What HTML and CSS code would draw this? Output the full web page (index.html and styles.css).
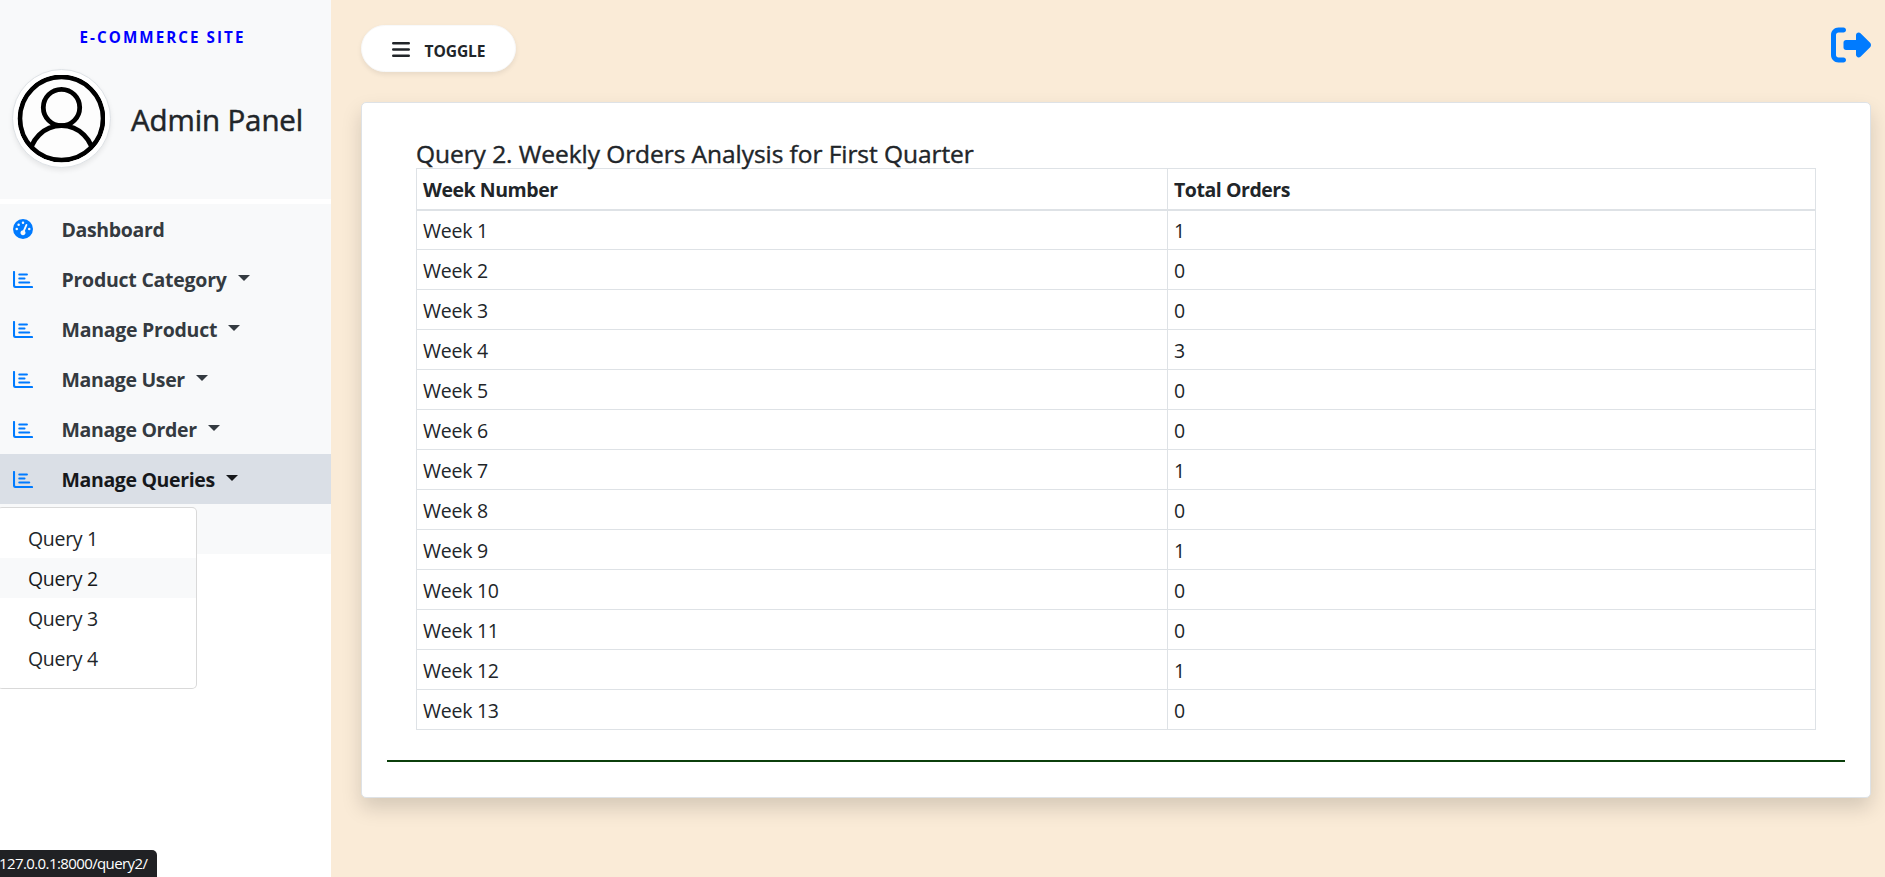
FILE: index.html
```
<!DOCTYPE html>
<html lang="en">
<head>
<meta charset="utf-8">
<title>Admin Panel</title>
<link rel="stylesheet" href="styles.css">
</head>
<body>
<svg class="sprite" aria-hidden="true">
  <symbol id="bars" viewBox="0 0 20 17">
    <path d="M1 1v13.200a1.800 1.800 0 0 0 1.800 1.800H19M6.300 3.500h7.600M6.300 7.500h5.200M6.300 11.500H16.200" fill="none" stroke="currentColor" stroke-width="2.100" stroke-linecap="round"/>
  </symbol>
</svg>
<div class="layout">
  <aside class="sidebar">
    <header class="brand">
      <p class="brand-name">E-COMMERCE SITE</p>
      <div class="profile">
        <svg class="avatar" viewBox="0 0 88 88">
          <defs><clipPath id="disc"><circle cx="44" cy="44" r="43"/></clipPath></defs>
          <circle cx="44" cy="44" r="41.6" fill="#fdfdfd"/>
          <g fill="none" stroke="#000" stroke-width="4.8">
            <circle cx="44" cy="33" r="18.2"/>
            <circle cx="44" cy="83" r="31.8" clip-path="url(#disc)"/>
            <circle cx="44" cy="44" r="41.6"/>
          </g>
        </svg>
        <h4 class="profile-name">Admin Panel</h4>
      </div>
    </header>
    <ul class="nav">
      <li class="nav-item"><svg class="gauge" viewBox="0 0 512 512"><path fill="currentColor" fill-rule="evenodd" d="M0 256a256 256 0 1 1 512 0A256 256 0 1 1 0 256zM288 96a32 32 0 1 0 -64 0 32 32 0 1 0 64 0zM256 416c35.3 0 64-28.7 64-64c0-17.4-6.9-33.1-18.1-44.6L366 161.7c5.3-12.1-.2-26.3-12.3-31.6s-26.3 .2-31.6 12.3L257.9 288c-.6 0-1.3 0-1.9 0c-35.3 0-64 28.7-64 64s28.7 64 64 64zM176 144a32 32 0 1 0 -64 0 32 32 0 1 0 64 0zM96 288a32 32 0 1 0 0-64 32 32 0 1 0 0 64zm352-32a32 32 0 1 0 -64 0 32 32 0 1 0 64 0z"/></svg><span>Dashboard</span></li>
      <li class="nav-item loose"><svg class="bars"><use href="#bars"/></svg><span>Product Category</span><i class="caret"></i></li>
      <li class="nav-item loose"><svg class="bars"><use href="#bars"/></svg><span>Manage Product</span><i class="caret"></i></li>
      <li class="nav-item"><svg class="bars"><use href="#bars"/></svg><span>Manage User</span><i class="caret"></i></li>
      <li class="nav-item"><svg class="bars"><use href="#bars"/></svg><span>Manage Order</span><i class="caret"></i></li>
      <li class="nav-item active"><svg class="bars"><use href="#bars"/></svg><span>Manage Queries</span><i class="caret"></i>
        <div class="menu">
          <a class="menu-item">Query 1</a>
          <a class="menu-item hover">Query 2</a>
          <a class="menu-item">Query 3</a>
          <a class="menu-item">Query 4</a>
        </div>
      </li>
      <li class="nav-item"></li>
    </ul>
  </aside>
  <main class="content">
    <div class="topbar">
      <button class="toggle"><svg class="burger" viewBox="0 0 18 15"><path d="M1.200 1.300h15.600M1.200 7.500h15.600M1.200 13.700h15.600" stroke="currentColor" stroke-width="2.400" stroke-linecap="round"/></svg><span>TOGGLE</span></button>
      <svg class="logout" viewBox="0 0 512 512"><path fill="currentColor" d="M377.9 105.9L500.7 228.7c7.2 7.2 11.3 17.1 11.3 27.3s-4.1 20.1-11.3 27.3L377.9 406.1c-6.4 6.4-15 9.9-24 9.9c-18.7 0-33.9-15.2-33.9-33.9l0-62.1-128 0c-17.7 0-32-14.3-32-32l0-64c0-17.7 14.3-32 32-32l128 0 0-62.1c0-18.7 15.2-33.9 33.9-33.9c9 0 17.6 3.6 24 9.9zM160 96L96 96c-17.7 0-32 14.3-32 32l0 256c0 17.7 14.3 32 32 32l64 0c17.7 0 32 14.3 32 32s-14.3 32-32 32l-64 0c-53 0-96-43-96-96L0 128C0 75 43 32 96 32l64 0c17.7 0 32 14.3 32 32s-14.3 32-32 32z"/></svg>
    </div>
    <section class="card">
      <h5 class="title">Query 2. Weekly Orders Analysis for First Quarter</h5>
      <table class="orders">
        <thead><tr><th>Week Number</th><th>Total Orders</th></tr></thead>
        <tbody>
          <tr><td>Week 1</td><td>1</td></tr>
          <tr><td>Week 2</td><td>0</td></tr>
          <tr><td>Week 3</td><td>0</td></tr>
          <tr><td>Week 4</td><td>3</td></tr>
          <tr><td>Week 5</td><td>0</td></tr>
          <tr><td>Week 6</td><td>0</td></tr>
          <tr><td>Week 7</td><td>1</td></tr>
          <tr><td>Week 8</td><td>0</td></tr>
          <tr><td>Week 9</td><td>1</td></tr>
          <tr><td>Week 10</td><td>0</td></tr>
          <tr><td>Week 11</td><td>0</td></tr>
          <tr><td>Week 12</td><td>1</td></tr>
          <tr><td>Week 13</td><td>0</td></tr>
        </tbody>
      </table>
      <hr class="rule">
    </section>
  </main>
</div>
<div class="status">127.0.0.1:8000/query2/</div>
</body>
</html>
```
FILE: styles.css
```
* { box-sizing: border-box; }
body {
  margin: 0;
  height: 877px;
  overflow: hidden;
  background: #faebd7;
  color: #212529;
  font: 19.5px/30px "Open Sans", "Noto Sans", sans-serif;
  letter-spacing: -0.25px;
}
.sprite { position: absolute; width: 0; height: 0; }
.layout { display: flex; height: 877px; }

.sidebar { width: 331px; flex: none; background: #fff; }
.brand { height: 199px; padding-top: 26px; background: #f8f9fa; }
.brand-name {
  margin: 0 0 20px;
  padding-right: 6px;
  text-align: center;
  color: #00f;
  font-size: 15.2px;
  line-height: 23px;
  font-weight: 700;
  letter-spacing: 2.05px;
}
.profile { display: flex; align-items: center; padding-left: 11.5px; }
.avatar {
  width: 99px;
  height: 99px;
  padding: 4.5px;
  border: 1px solid #dee2e6;
  border-radius: 50%;
  background: #fff;
  box-shadow: 0 2.5px 5px rgba(0, 0, 0, .075);
}
.profile-name {
  margin: 3px 0 0 20.5px;
  font-size: 29.5px;
  line-height: 36px;
  font-weight: 500;
  letter-spacing: -0.12px;
  -webkit-text-stroke: 0.5px currentColor;
}
.nav { list-style: none; margin: 5px 0 0; padding: 0; background: #f8f9fa; }
.nav-item {
  position: relative;
  display: flex;
  align-items: center;
  height: 50px;
  padding-left: 13px;
  color: #343a40;
  font-weight: 700;
  letter-spacing: -0.35px;
}
.nav-item.loose { letter-spacing: -0.25px; }
.nav-item span { padding-top: 2px; }
.nav-item.active { background: #dadfe6; color: #16181b; }
.gauge { width: 20px; height: 20px; margin-right: 28.5px; color: #007bff; }
.bars { width: 20px; height: 17px; margin-right: 28.5px; color: #007bff; }
.caret {
  margin: 0 0 2px 11px;
  border-top: 6px solid;
  border-left: 6px solid transparent;
  border-right: 6px solid transparent;
}
.menu {
  position: absolute;
  top: 53px;
  left: -3px;
  z-index: 2;
  width: 200px;
  padding: 10px 0;
  background: #fff;
  border: 1px solid rgba(0, 0, 0, .15);
  border-radius: 5px;
}
.menu-item {
  display: block;
  height: 40px;
  padding: 6px 30px 4px;
  color: #212529;
  font-weight: 400;
  letter-spacing: -0.3px;
}
.menu-item.hover { background: #f8f9fa; color: #16181b; }

.content { flex: 1; padding: 25px 14px 0 30px; }
.topbar { display: flex; justify-content: space-between; align-items: flex-start; height: 77px; }
.toggle {
  display: flex;
  align-items: center;
  width: 155px;
  height: 47px;
  padding: 0 0 0 30px;
  border: 1px solid #f8f9fa;
  border-radius: 24px;
  background: #fff;
  color: #212529;
  font: 700 15.6px/24px "Open Sans", sans-serif;
  letter-spacing: -0.1px;
  box-shadow: 0 2.5px 5px rgba(0, 0, 0, .075);
}
.toggle span { padding-top: 5px; }
.burger { width: 18px; height: 15px; margin: 2px 14.5px 0 0; }
.logout { width: 40px; height: 40px; color: #007bff; }

.card {
  height: 696px;
  padding: 36px 25px 0;
  background: #fff;
  border: 1px solid #dee2e6;
  border-radius: 5px;
  box-shadow: 0 10px 20px rgba(0, 0, 0, .15);
}
.title {
  margin: 0 29px;
  font-size: 24.5px;
  line-height: 30px;
  height: 29px;
  font-weight: 500;
  letter-spacing: -0.06px;
  -webkit-text-stroke: 0.4px currentColor;
}
.orders {
  width: 1400px;
  margin: 0 29px;
  table-layout: fixed;
  border-collapse: collapse;
}
.orders th, .orders td {
  height: 40px;
  padding: 3px 6px 0;
  border: 1px solid #dee2e6;
  text-align: left;
}
.orders th { height: 41px; border-bottom-width: 2px; letter-spacing: -0.45px; }
.orders th:first-child { width: 751px; }
.rule { margin: 30px 0 0; border: 0; height: 2px; background: #0b3f0b; }

.status {
  position: absolute;
  left: 0;
  bottom: 0;
  width: 157px;
  height: 27px;
  border-radius: 0 5px 0 0;
  background: #202124;
  color: #fff;
  font-size: 15px;
  line-height: 27px;
  letter-spacing: -0.6px;
  text-indent: -1px;
  white-space: nowrap;
}
```
